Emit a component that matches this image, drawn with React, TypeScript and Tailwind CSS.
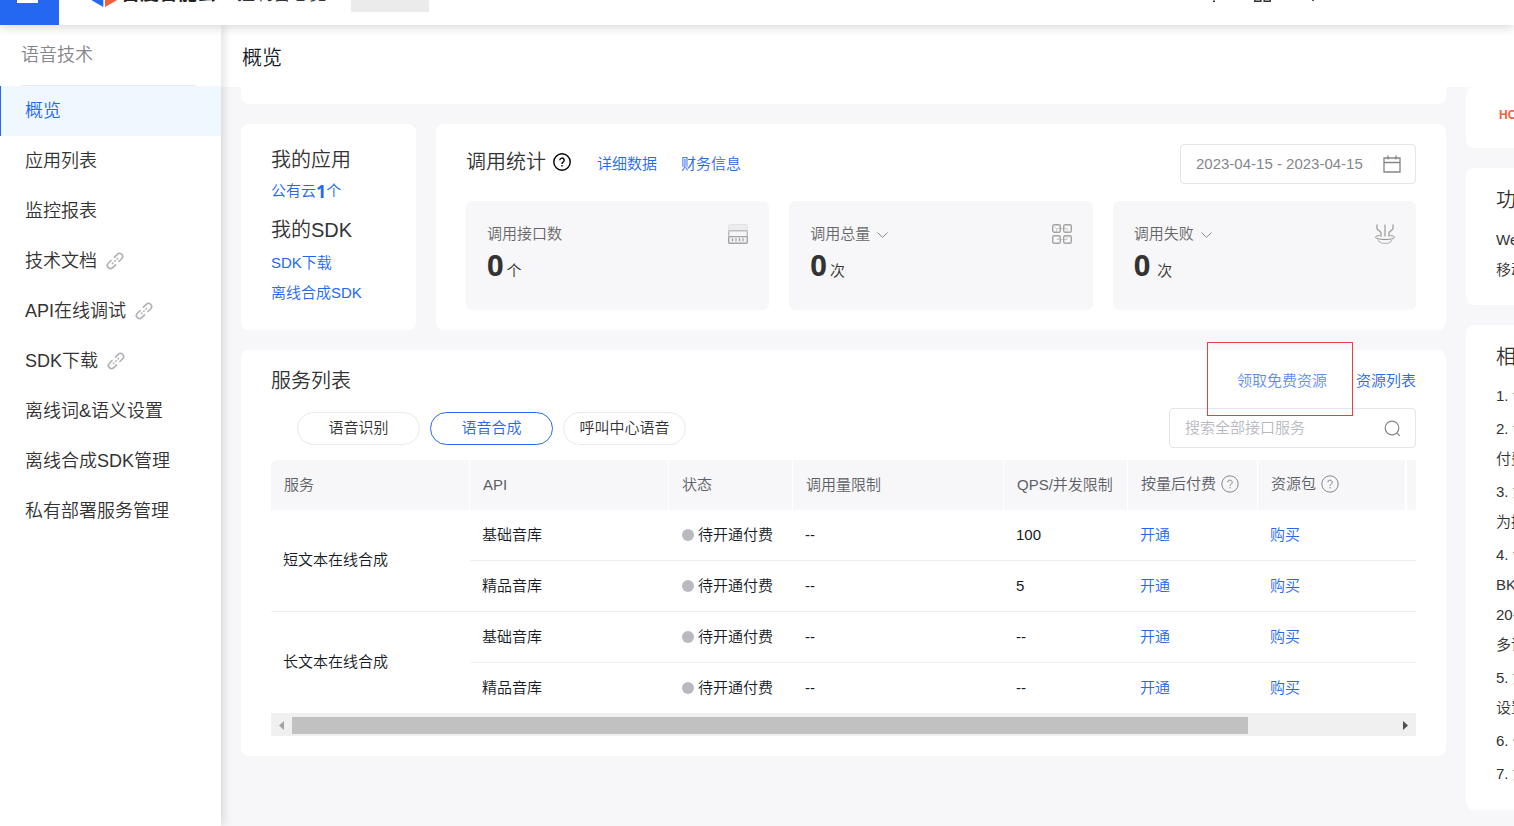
import type { ReactNode } from 'react';

const navItems = [
  { label: '概览', active: true },
  { label: '应用列表' },
  { label: '监控报表' },
  { label: '技术文档', external: true },
  { label: 'API在线调试', external: true },
  { label: 'SDK下载', external: true },
  { label: '离线词&语义设置' },
  { label: '离线合成SDK管理' },
  { label: '私有部署服务管理' },
];

const services = [
  { name: '短文本在线合成', apis: [{ api: '基础音库', qps: '100' }, { api: '精品音库', qps: '5' }] },
  { name: '长文本在线合成', apis: [{ api: '基础音库', qps: '--' }, { api: '精品音库', qps: '--' }] },
];

function ChainIcon() {
  return (
    <svg className="size-[18px] text-[#b0b1b6]" viewBox="0 0 18 18" fill="none" stroke="currentColor" strokeWidth="1.6" strokeLinecap="round" aria-hidden="true">
      <g transform="rotate(-45 9 9)">
        <path d="M6.6 5.9H2.7a3.1 3.1 0 0 0 0 6.2h3.9" />
        <path d="M11.4 5.9h3.9a3.1 3.1 0 0 1 0 6.2h-3.9" />
        <path d="M5.4 9h.6M8.7 9h.6M12 9h.6" />
      </g>
    </svg>
  );
}

function HelpIcon({ className }: { className: string }) {
  return (
    <svg className={className} viewBox="0 0 18 18" fill="none" stroke="currentColor" aria-hidden="true">
      <circle cx="9" cy="9" r="8.2" />
      <path d="M6.8 7.3a2.2 2.2 0 1 1 3.3 1.9c-.8.5-1.1.8-1.1 1.7" />
      <path d="M9 12v1.4" />
    </svg>
  );
}

function ChevronIcon() {
  return (
    <svg className="mt-[2px] h-[6px] w-[11px] text-[#888]" viewBox="0 0 11 6" fill="none" stroke="currentColor" aria-hidden="true">
      <path d="M.5.5l5 4.8 5-4.8" />
    </svg>
  );
}

function InterfaceIcon() {
  return (
    <svg className="size-5" viewBox="0 0 20 20" fill="none" aria-hidden="true">
      <rect x=".5" y=".5" width="19" height="7" rx="1" fill="#ececee" stroke="#e2e2e3" />
      <rect x=".7" y="6.7" width="18.6" height="6" rx="1" fill="#f6f6f8" stroke="#bdbdbd" strokeWidth="1.4" />
      <rect x=".7" y="12.6" width="18.6" height="6.6" rx="1" fill="#f2f2f2" stroke="#a3a3a3" strokeWidth="1.4" />
      <path d="M4.5 14.2v3M8 14.2v3M11.5 14.2v3M15 14.2v3" stroke="#999" strokeWidth="1.2" />
    </svg>
  );
}

function TotalIcon() {
  return (
    <svg className="size-5" viewBox="0 0 20 20" fill="none" aria-hidden="true">
      <path d="M5 4.500h10M5 15.500h10M4.500 4.500v3M4.500 4.500l-2-1.500M15 4.500v3M5 15.500l2-2M15 15.500v-3" stroke="#cacaca" />
      <g stroke="#a3a3a3" strokeWidth="1.4">
        <rect x=".7" y=".7" width="7.6" height="7.6" rx="1.6" />
        <rect x="11.7" y=".7" width="7.6" height="7.6" rx="1.6" />
        <rect x=".7" y="11.7" width="7.6" height="7.6" rx="1.6" />
        <rect x="11.7" y="11.7" width="7.6" height="7.6" rx="1.6" />
      </g>
    </svg>
  );
}

function FailIcon() {
  return (
    <svg className="size-5" viewBox="0 0 20 20" fill="none" stroke="#a3a3a3" aria-hidden="true">
      <path d="M2 .5v4.200c0 1 4 2.500 4 4v4M18 .5v4.200c0 1-4 2.500-4 4v4" strokeWidth="1.400" />
      <path d="M10 .5v12" stroke="#b0b0b0" strokeWidth="1.600" />
      <path d="M4.500 11.500c-2.500.3-4 1-4 1.800 0 1.200 4 2.200 9.500 2.200s9.500-1 9.500-2.200c0-.8-1.500-1.500-4-1.800" stroke="#8f8f8f" />
      <path d="M3.200 15.500c.3 2.400 3 3.900 6.800 3.900s6.500-1.500 6.800-3.900" stroke="#bbb" strokeWidth="1.200" />
    </svg>
  );
}

function TextLink({ children, className = '' }: { children: ReactNode; className?: string }) {
  return <a href="#" className={`text-[15px] text-[#2468f2] ${className}`}>{children}</a>;
}

function StatCard({ label, unit, icon, menu, wide }: { label: string; unit: string; icon: ReactNode; menu?: boolean; wide?: boolean }) {
  return (
    <div className="h-[109px] rounded-md bg-[#f7f7f9] px-[21px] pt-[18px]">
      <div className="flex h-[30px] items-center justify-between text-[15px] text-[#666]">
        {menu ? (
          <button type="button" className="flex items-center gap-[7px]">{label}<ChevronIcon /></button>
        ) : (
          <span>{label}</span>
        )}
        {icon}
      </div>
      <p className={`flex items-baseline leading-8 ${wide ? 'gap-[7px]' : 'gap-[3px]'}`}>
        <strong className="font-['Noto_Sans',sans-serif] text-[29px] font-bold text-[#333]">0</strong>
        <span className="text-[15px] text-[#333]">{unit}</span>
      </p>
    </div>
  );
}

function Header() {
  return (
    <header className="relative z-20 -mt-[37px] flex h-[62px] items-center bg-white shadow-[0_2px_10px_rgba(0,0,0,0.16)]">
      <button type="button" aria-label="菜单" className="flex h-full w-[59px] items-center bg-[#2468f2] pl-[17px]">
        <svg className="h-[18px] w-[21px]" viewBox="0 0 21 18" fill="#fff" aria-hidden="true">
          <path d="M0 0h21v3H0zM0 7h21v3H0zM0 15h21v3H0z" />
        </svg>
      </button>
      <a href="#" className="ml-8 flex items-center gap-1 text-[19px] font-bold text-[#222]">
        <svg className="h-[26px] w-[26px]" viewBox="0 0 26 26" aria-hidden="true">
          <path d="M12.300 0v8L7 11v5l5.300 3v7L1 19.500v-13z" fill="#2468f2" />
          <path d="M14 0v8l5 3v5l-5 3v7l11.500-6.500v-13z" fill="#f0603f" />
        </svg>
        百度智能云
      </a>
      <a href="#" className="ml-[21px] text-[18px] text-[#333]">控制台总览</a>
      <span className="ml-6 h-9 w-[78px] bg-[#ebebeb]" />
      <div className="ml-auto flex items-center pr-[193px] text-[#333]">
        <button type="button" aria-label="消息" className="mr-[32px]">
          <svg className="size-4" viewBox="0 0 16 16" fill="none" stroke="currentColor" strokeWidth="1.400" aria-hidden="true">
            <path d="M8 1a4 4 0 0 0-4 4v4l-2 3h12l-2-3V5a4 4 0 0 0-4-4zM7 15.200h2" />
          </svg>
        </button>
        <button type="button" aria-label="应用" className="mr-[34px]">
          <svg className="h-[15px] w-[17px]" viewBox="0 0 17 15" fill="none" stroke="currentColor" strokeWidth="1.500" aria-hidden="true">
            <path d="M.8.8h6v5.500h-6zM10.200.8h6v5.500h-6zM.8 9h6v5.300h-6zM10.200 9h6v5.300h-6z" />
          </svg>
        </button>
        <button type="button" aria-label="帮助">
          <svg className="size-4" viewBox="0 0 16 16" fill="none" stroke="currentColor" strokeWidth="1.600" aria-hidden="true">
            <path d="M4.500 5a3.500 3.500 0 1 1 5 3C8.300 8.700 8 9.500 8 11M8 13v2" />
          </svg>
        </button>
      </div>
    </header>
  );
}

function Sidebar() {
  return (
    <nav className="relative z-10 w-[221px] shrink-0 bg-white text-[18px] text-[#333] shadow-[2px_0_10px_rgba(0,0,0,0.14)]">
      <h2 className="mr-[25px] ml-[21px] h-[61px] border-b border-[#e8e9eb] leading-[60px] text-[#84868c]">语音技术</h2>
      <ul>
        {navItems.map((item) => (
          <li key={item.label}>
            <a
              href="#"
              className={`flex h-[50px] items-center gap-[9px] border-l pl-6 ${item.active ? 'border-[#2468f2] bg-[#f0f8ff] text-[#2468f2]' : 'border-transparent'}`}
            >
              {item.label}
              {item.external && <ChainIcon />}
            </a>
          </li>
        ))}
      </ul>
    </nav>
  );
}

function AppsCard() {
  return (
    <section className="w-[175px] shrink-0 rounded-lg bg-white px-[30px] pt-5">
      <h2 className="text-[20px] leading-8">我的应用</h2>
      <div className="flex h-[30px] items-center">
        <TextLink className="flex items-center">
          公有云<b className="font-['Noto_Sans',sans-serif] text-[18px] leading-none font-bold">1</b>个
        </TextLink>
      </div>
      <h2 className="mt-2 text-[20px] leading-8">我的SDK</h2>
      <div className="mt-[2px] flex flex-col leading-[30px] whitespace-nowrap">
        <TextLink>SDK下载</TextLink>
        <TextLink>离线合成SDK</TextLink>
      </div>
    </section>
  );
}

function StatsCard() {
  return (
    <section className="min-w-0 flex-1 rounded-lg bg-white px-[30px] py-5">
      <div className="flex h-10 items-center">
        <div className="mr-[26px] flex items-center gap-[7px] pb-[5px]">
          <h2 className="text-[20px]">调用统计</h2>
          <button type="button" aria-label="统计说明" className="text-black">
            <HelpIcon className="block size-[18px] stroke-[1.4]" />
          </button>
        </div>
        <TextLink className="mr-6">详细数据</TextLink>
        <TextLink>财务信息</TextLink>
        <button type="button" aria-label="日期范围" className="ml-auto flex h-10 w-[236px] items-center justify-between rounded border border-[#e4e5e8] pr-[14px] pl-[15px] text-[15px] text-[#84868c]">
          2023-04-15 - 2023-04-15
          <svg className="size-[18px]" viewBox="0 0 18 18" fill="none" stroke="currentColor" strokeWidth="1.300" aria-hidden="true">
            <path d="M1 3h16v14H1zM1 7.500h16M5 .5v4M13 .5v4" />
          </svg>
        </button>
      </div>
      <div className="mt-[17px] grid grid-cols-3 gap-5">
        <StatCard label="调用接口数" unit="个" icon={<InterfaceIcon />} />
        <StatCard label="调用总量" unit="次" icon={<TotalIcon />} menu />
        <StatCard label="调用失败" unit="次" icon={<FailIcon />} menu wide />
      </div>
    </section>
  );
}

const tabClass = 'h-[33px] w-[123px] rounded-full border text-[15px]';

function ServiceTable() {
  const th = 'border-r border-white bg-[#f7f7f9] px-[13px] text-left font-[350]';
  const td = 'h-[51px] border-b border-[#eeeff1] px-3';
  return (
    <table className="w-full table-fixed border-separate border-spacing-0 text-[15px] text-[#151b26]">
      <colgroup>
        <col className="w-[199px]" />
        <col className="w-[199px]" />
        <col className="w-[124px]" />
        <col />
        <col className="w-[124px]" />
        <col className="w-[130px]" />
        <col className="w-[149px]" />
        <col className="w-[9px]" />
      </colgroup>
      <thead>
        <tr className="h-[50px] whitespace-nowrap text-[#5c5f66]">
          <th className={`${th} rounded-tl-md`}>服务</th>
          <th className={th}>API</th>
          <th className={th}>状态</th>
          <th className={th}>调用量限制</th>
          <th className={th}>QPS/并发限制</th>
          <th className={th}>
            <span className="flex items-center gap-[5px] pb-[2px]">按量后付费<HelpIcon className="size-[18px] text-[#84868c]" /></span>
          </th>
          <th className={`${th} border-r-2`}>
            <span className="flex items-center gap-[5px] pb-[2px]">资源包<HelpIcon className="size-[18px] text-[#84868c]" /></span>
          </th>
          <th className="bg-[#f7f7f9] p-0" aria-label="操作" />
        </tr>
      </thead>
      {services.map((service) => (
        <tbody key={service.name} className="last:[&_td[rowspan]]:border-b-0 last:[&>tr:last-child>td]:h-[50px] last:[&>tr:last-child>td]:border-b-0">
          {service.apis.map((row, i) => (
            <tr key={row.api}>
              {i === 0 && <td rowSpan={2} className="border-b border-[#eeeff1] px-3">{service.name}</td>}
              <td className={td}>{row.api}</td>
              <td className={`${td} whitespace-nowrap`}>
                <span className="flex items-center gap-1">
                  <i className="ml-[1px] size-3 shrink-0 rounded-full bg-[#b8babf]" />待开通付费
                </span>
              </td>
              <td className={td}>--</td>
              <td className={td}>{row.qps}</td>
              <td className={td}><TextLink>开通</TextLink></td>
              <td className={td}><TextLink>购买</TextLink></td>
              <td className="border-b border-[#eeeff1] p-0" />
            </tr>
          ))}
        </tbody>
      ))}
    </table>
  );
}

function ScrollBar() {
  return (
    <div className="flex h-[23px] items-center bg-[#f0f0f0] pt-[2px]">
      <button type="button" aria-label="向左滚动" className="flex w-[21px] justify-center">
        <svg className="h-[9px] w-[5px]" viewBox="0 0 5 9" fill="#a3a3a3" aria-hidden="true"><path d="M5 0v9L0 4.500z" /></svg>
      </button>
      <div className="flex-1">
        <div className="h-[17px] w-13/15 bg-[#c1c1c1]" />
      </div>
      <button type="button" aria-label="向右滚动" className="flex w-[21px] justify-center">
        <svg className="h-[9px] w-[5px]" viewBox="0 0 5 9" fill="#505050" aria-hidden="true"><path d="M0 0v9l5-4.500z" /></svg>
      </button>
    </div>
  );
}

function ServicesCard() {
  return (
    <section className="rounded-lg bg-white px-[30px] pt-4 pb-5">
      <div className="flex h-[30px] items-center justify-between">
        <h2 className="text-[20px] leading-8">服务列表</h2>
        <div className="flex gap-[29px]">
          <span className="relative flex">
            <TextLink className="opacity-75">领取免费资源</TextLink>
            <span className="pointer-events-none absolute -top-[28px] -right-[26px] -bottom-[24px] -left-[30px] border border-[#f03c3c]" />
          </span>
          <TextLink>资源列表</TextLink>
        </div>
      </div>
      <div className="mt-3 mb-3 flex items-center justify-between">
        <div className="flex gap-[10px] pl-[26px]">
          <button type="button" className={`${tabClass} border-[#e8e9eb]`}>语音识别</button>
          <button type="button" className={`${tabClass} border-[#2468f2] text-[#2468f2]`}>语音合成</button>
          <button type="button" className={`${tabClass} border-[#e8e9eb]`}>呼叫中心语音</button>
        </div>
        <label className="flex h-10 w-[247px] items-center rounded border border-[#e4e5e8] pr-[14px] pl-[15px]">
          <input type="text" aria-label="搜索" placeholder="搜索全部接口服务" className="min-w-0 flex-1 text-[15px] outline-none placeholder:text-[#b8babf]" />
          <svg className="size-[17px] text-[#84868c]" viewBox="0 0 17 17" fill="none" stroke="currentColor" strokeWidth="1.200" aria-hidden="true">
            <circle cx="8" cy="8" r="6.800" /><path d="M12.800 12.800l3 3" />
          </svg>
        </label>
      </div>
      <ServiceTable />
      <ScrollBar />
    </section>
  );
}

function Aside() {
  const card = 'overflow-hidden whitespace-nowrap rounded-l-lg bg-white pl-[30px]';
  return (
    <aside className="flex w-12 shrink-0 flex-col gap-5">
      <div className={`${card} h-[61px] rounded-t-none pt-[15px]`}>
        <span className="ml-[3px] text-[12px] font-bold text-[#f0603f]">HOT</span>
      </div>
      <section className={`${card} h-[137px] pt-[17px] text-[15px] leading-[30px]`}>
        <h2 className="mb-[10px] text-[20px]">功能</h2>
        <p>Web</p>
        <p>移动</p>
      </section>
      <section className={`${card} h-[485px] pt-[17px] text-[15px] leading-[30px]`}>
        <h2 className="mb-[9px] text-[20px]">相关</h2>
        <ol className="flex flex-col gap-[3px]">
          <li>1. 语</li>
          <li>2. 计<br />付费</li>
          <li>3. 如<br />为提</li>
          <li>4. 语<br />BK<br />20-<br />多语</li>
          <li>5. 如<br />设置</li>
          <li>6. 什</li>
          <li>7. 如</li>
        </ol>
      </section>
    </aside>
  );
}

export default function App() {
  return (
    <div className="flex min-h-screen flex-col bg-[#f7f7f9] font-['Liberation_Sans','Noto_Sans_CJK_SC',sans-serif] font-[350] text-[#333]">
      <Header />
      <div className="flex flex-1">
        <Sidebar />
        <main className="flex min-w-0 flex-1 flex-col">
          <h1 className="h-[62px] bg-white pt-[2px] pl-[21px] text-[20px] leading-[62px] text-[#151b26]">概览</h1>
          <div className="flex gap-5 pl-5">
            <div className="flex min-w-0 flex-1 flex-col gap-5">
              <div className="h-[17px] rounded-b-lg bg-white" />
              <div className="flex gap-5">
                <AppsCard />
                <StatsCard />
              </div>
              <ServicesCard />
            </div>
            <Aside />
          </div>
        </main>
      </div>
    </div>
  );
}
